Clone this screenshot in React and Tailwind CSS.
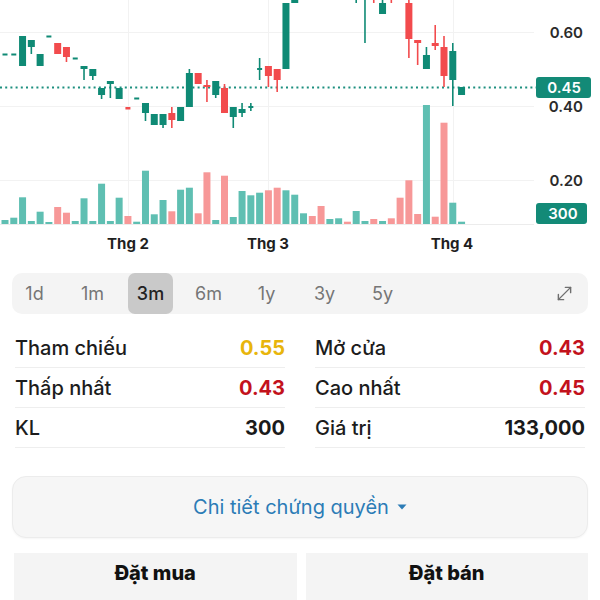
import React from "react";

const X0 = 5;
const DX = 8.78;

// [color, bodyTop, bodyBottom, wickTop, wickBottom, kind]
const candles = [
  ["g", 53.5, 55.5, null, null, "d"],
  ["g", 53.5, 55.5, null, null, "d"],
  ["g", 36, 66],
  ["g", 40, 47, null, 54],
  ["g", 54, 66],
  ["g", 35.5, 37.5, null, null, "d"],
  ["r", 43, 54],
  ["r", 47, 57, null, 62],
  ["g", 57.5, 59.5, null, null, "d"],
  ["g", 66, 69, null, 80],
  ["g", 69, 76, null, 80],
  ["g", 88, 95, null, 99],
  ["g", 81, 84, null, 98],
  ["g", 88, 99],
  ["r", 107, 109.5, null, null, "d"],
  ["g", 97.5, 99.5, null, null, "d"],
  ["g", 103, 113, null, 121],
  ["g", 114, 125],
  ["g", 114, 125, null, 128],
  ["r", 113, 120, 107, 128],
  ["g", 107, 121],
  ["g", 73, 107, 69, null],
  ["r", 73, 84],
  ["r", 85, 87, 80, 102],
  ["g", 81, 95, null, 98],
  ["r", 88, 113, 84, null],
  ["g", 107, 117, null, 128],
  ["g", 109, 113, 103, 117],
  ["g", 106, 108, 103, 111, "x"],
  ["g", 68, 70, 58, 80, "x"],
  ["r", 66, 76, null, 87],
  ["r", 69, 80, null, 92],
  ["g", 3, 69],
  ["g", -20, 3],
  ["g", -60, -30],
  ["r", -60, -30],
  ["r", -60, -30],
  ["g", -60, -30],
  ["g", -60, -30],
  ["r", -60, -30],
  ["g", -30, -5, -40, 3],
  ["g", -30, -8, -40, 43],
  ["r", -30, -8, -40, 3],
  ["g", 3, 14, -5, null],
  ["r", -30, -8, -40, 3],
  ["r", -40, -20],
  ["r", 3, 39, -2, 58],
  ["r", 40, 43, null, 65],
  ["g", 55, 69, 47, null],
  ["r", 43, 46, 25, 50],
  ["r", 47, 76, 36, 87],
  ["g", 51, 80, 43, 106],
  ["g", 87, 95],
];

const volTops = [
  220, 217.7, 197.3, 221, 211.7, 222, 207, 212.7, 221, 198.3, 221, 183.7, 221,
  197.7, 216, 221.7, 170.7, 214.3, 200, 211.3, 189.7, 187.7, 213.3, 172.3, 220,
  175.7, 217, 191, 195.3, 192.7, 190.3, 187.7, 190.3, 194.7, 213.3, 216, 206,
  219, 218.3, 221.7, 211, 221, 219, 221, 218.3, 197.7, 180.3, 214, 105, 216.7,
  122.7, 202.7, 221.7,
];

const C_G = "#0f8a75";
const C_R = "#f24b4d";
const V_G = "#5fbfb2";
const V_R = "#f79898";
const BASE = 224;

function Chart() {
  return (
    <svg width="600" height="260" viewBox="0 0 600 260" className="block">
      <g stroke="#f2f2f2" strokeWidth="1">
        <line x1="0" y1="32.5" x2="534" y2="32.5" />
        <line x1="0" y1="106.5" x2="534" y2="106.5" />
        <line x1="0" y1="180.5" x2="534" y2="180.5" />
        <line x1="128.5" y1="0" x2="128.5" y2="224" />
        <line x1="268.5" y1="0" x2="268.5" y2="224" />
        <line x1="453.5" y1="0" x2="453.5" y2="224" />
      </g>
      <line x1="0" y1="224.5" x2="534" y2="224.5" stroke="#ececec" strokeWidth="1" />

      {volTops.map((t, i) => {
        const x = X0 + i * DX;
        const col = candles[i][0] === "g" ? V_G : V_R;
        return (
          <rect key={"v" + i} x={x - 3.5} y={t} width="7" height={BASE - t} fill={col} />
        );
      })}

      <line
        x1="0"
        y1="87.5"
        x2="536"
        y2="87.5"
        stroke="#1d8f7f"
        strokeWidth="2"
        strokeDasharray="2 3.2"
      />

      {candles.map((c, i) => {
        const x = X0 + i * DX;
        const col = c[0] === "g" ? C_G : C_R;
        const [, top, bot, wt, wb, kind] = c;
        const wTop = wt == null ? top : wt;
        const wBot = wb == null ? bot : wb;
        const w = kind === "d" || kind === "x" ? 5 : 7;
        return (
          <g key={"c" + i}>
            {(wTop < top || wBot > bot) && (
              <line x1={x} y1={wTop} x2={x} y2={wBot} stroke={col} strokeWidth="1.6" />
            )}
            <rect x={x - w / 2} y={top} width={w} height={Math.max(bot - top, 2)} fill={col} />
          </g>
        );
      })}

      <g fontSize="15" fontWeight="600" fill="#2b2b2b">
        <text x="583" y="37.5" textAnchor="end">0.60</text>
        <text x="583" y="111.5" textAnchor="end">0.40</text>
        <text x="583" y="185.5" textAnchor="end">0.20</text>
      </g>

      <rect x="536" y="77" width="55" height="21" rx="3" fill="#138a77" />
      <text x="564" y="93" textAnchor="middle" fontSize="15" fontWeight="600" fill="#ffffff">
        0.45
      </text>
      <rect x="536" y="203" width="51" height="21" rx="3" fill="#138a77" />
      <text x="563" y="219" textAnchor="middle" fontSize="15" fontWeight="600" fill="#ffffff">
        300
      </text>

      <g fontSize="15" fontWeight="700" fill="#1f1f1f" textAnchor="middle">
        <text x="128" y="249">Thg 2</text>
        <text x="268" y="249">Thg 3</text>
        <text x="452" y="249">Thg 4</text>
      </g>
    </svg>
  );
}

const tabs = ["1d", "1m", "3m", "6m", "1y", "3y", "5y"];

function Tabs() {
  return (
    <div className="mx-3 mt-[13px] flex h-[41px] items-stretch rounded-[10px] bg-[#f4f4f4]">
      <div className="flex gap-[13px]">
        {tabs.map((t) => (
          <div
            key={t}
            className={
              t === "3m"
                ? "flex w-[45px] items-center justify-center rounded-[7px] bg-[#c9c9c9] text-[18px] font-medium text-[#222]"
                : "flex w-[45px] items-center justify-center text-[18px] text-[#767676]"
            }
          >
            {t}
          </div>
        ))}
      </div>
      <div className="ml-auto flex items-center pr-[13px]">
        <svg width="21" height="21" viewBox="0 0 24 24" fill="none" stroke="#6f6f6f" strokeWidth="1.6" strokeLinecap="round" strokeLinejoin="round">
          <polyline points="13 5 19 5 19 11" />
          <polyline points="11 19 5 19 5 13" />
          <line x1="19" y1="5" x2="5" y2="19" />
        </svg>
      </div>
    </div>
  );
}

function Row({ label, value, color }) {
  return (
    <div className="flex h-[40px] items-center justify-between border-b border-[#eeeeee]">
      <span className="text-[20px] font-medium text-[#1c1c1c]">{label}</span>
      <span className={"text-[20px] font-bold " + color}>{value}</span>
    </div>
  );
}

function Stats() {
  return (
    <div className="mt-[14px] grid grid-cols-2 gap-x-[30px] px-[15px]">
      <div>
        <Row label="Tham chiếu" value="0.55" color="text-[#e8b50c]" />
        <Row label="Thấp nhất" value="0.43" color="text-[#c3121c]" />
        <Row label="KL" value="300" color="text-[#1a1a1a]" />
      </div>
      <div>
        <Row label="Mở cửa" value="0.43" color="text-[#c3121c]" />
        <Row label="Cao nhất" value="0.45" color="text-[#c3121c]" />
        <Row label="Giá trị" value="133,000" color="text-[#1a1a1a]" />
      </div>
    </div>
  );
}

export default function App() {
  return (
    <div className="relative h-[600px] w-[600px] overflow-hidden bg-white font-['Inter',sans-serif]">
      <Chart />
      <Tabs />
      <Stats />
      <div className="mx-3 mt-[28px] flex h-[62px] items-center justify-center gap-[8px] rounded-[14px] border border-[#ececec] bg-[#f6f6f6] shadow-[0_1px_2px_rgba(0,0,0,0.04)]">
        <span className="text-[20px] text-[#2c7cb6]">Chi tiết chứng quyền</span>
        <svg width="10" height="6" viewBox="0 0 10 6">
          <path d="M0.5 0.5 L9.5 0.5 L5 5.5 Z" fill="#2c7cb6" />
        </svg>
      </div>
      <div className="mt-[15px] flex gap-[9px] pl-[14px] pr-[12px]">
        <div className="flex h-[56px] flex-1 items-start justify-center bg-[#f4f4f4] pt-[8px]">
          <span className="text-[20px] leading-[24px] font-extrabold text-[#111]">Đặt mua</span>
        </div>
        <div className="flex h-[56px] flex-1 items-start justify-center bg-[#f4f4f4] pt-[8px]">
          <span className="text-[20px] leading-[24px] font-extrabold text-[#111]">Đặt bán</span>
        </div>
      </div>
    </div>
  );
}
